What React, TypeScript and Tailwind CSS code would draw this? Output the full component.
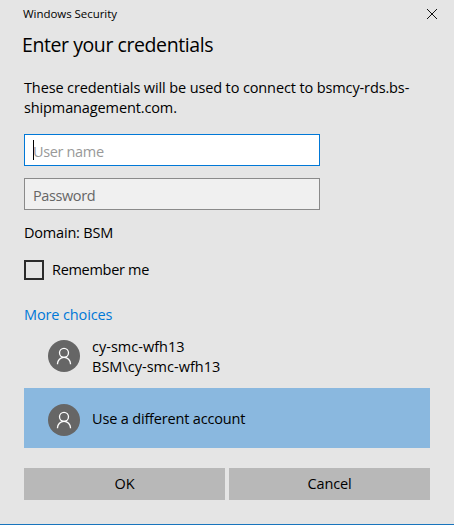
import React from 'react';

interface AccountRowProps {
  lines: string[];
  selected?: boolean;
}

const Avatar: React.FC = () => (
  <svg className="block h-8 w-8 shrink-0" viewBox="0 0 32 32" fill="none">
    <circle cx="16" cy="16" r="16" fill="#666666" />
    <circle cx="16" cy="12.8" r="4.5" stroke="#ffffff" strokeWidth="1.3" />
    <path d="M9.5 24.2v-.4a6.5 6.5 0 0 1 13 0v.4" stroke="#ffffff" strokeWidth="1.3" />
  </svg>
);

const AccountRow: React.FC<AccountRowProps> = ({ lines, selected }) => (
  <div
    className={
      selected
        ? 'flex h-[60px] items-center gap-3 bg-[#8ab8df] pt-1 pl-6'
        : 'flex h-[62px] items-center gap-3 pb-[2px] pl-6'
    }
  >
    <Avatar />
    <div
      className={
        selected
          ? 'pb-[2px] leading-5 tracking-[-0.17px]'
          : 'pt-[2px] leading-5 tracking-[0.02px]'
      }
    >
      {lines.map((line) => (
        <div key={line}>{line}</div>
      ))}
    </div>
  </div>
);

export default function App() {
  return (
    <div className="h-[529px] w-[454px] bg-white">
      <div className="flex h-[525px] flex-col border-b border-[#1874bd] bg-[#e5e5e5] pr-6 pl-6 font-['Open_Sans','Noto_Sans',sans-serif] text-[14.5px] leading-5 tracking-[-0.12px] text-black">
        {/* title bar */}
        <div className="-ml-px flex h-7 items-center justify-between">
          <span className="text-[11.5px] tracking-[-0.05px]">Windows Security</span>
          <svg className="mr-[-7px] block h-[10px] w-[10px]" viewBox="0 0 10 10" stroke="#111111">
            <path d="M0 0L10 10M10 0L0 10" />
          </svg>
        </div>
        <h1 className="-ml-[2px] mt-[3px] text-[19.5px] leading-7 tracking-[-0.42px]">Enter your credentials</h1>

        <p className="mt-[19px] h-10 whitespace-nowrap">
          These credentials will be used to connect to bsmcy-rds.bs-
          <br />
          shipmanagement.com.
        </p>

        {/* credential fields */}
        <div className="mt-4 flex h-8 w-[296px] items-center border border-[#0078d7] bg-white pl-2 text-[#999999]">
          <span className="h-5 w-px bg-black" />
          <span className="-ml-px pt-[3px] tracking-[-0.35px]">User name</span>
        </div>
        <div className="mt-3 flex h-8 w-[296px] items-center border border-[#8a8a8a] bg-[#f0f0f0] pt-1 pl-2 tracking-[-0.4px] text-[#666666]">
          Password
        </div>

        <div className="mt-[13px] tracking-[-0.2px]">Domain: BSM</div>
        <div className="mt-[17px] flex h-5 items-center gap-2">
          <span className="h-5 w-5 border-2 border-[#2b2b2b]" />
          <span className="tracking-[-0.3px]">Remember me</span>
        </div>

        <div className="mt-[25px] text-[#0078d7]">More choices</div>
        <div className="mt-[1px]">
          <AccountRow lines={['cy-smc-wfh13', 'BSM\\cy-smc-wfh13']} />
          <AccountRow lines={['Use a different account']} selected />
        </div>

        <div className="mt-5 grid h-8 grid-cols-2 gap-1 text-center leading-8">
          <button className="bg-[#b8b8b8]">OK</button>
          <button className="bg-[#b8b8b8]">Cancel</button>
        </div>
      </div>
    </div>
  );
}
